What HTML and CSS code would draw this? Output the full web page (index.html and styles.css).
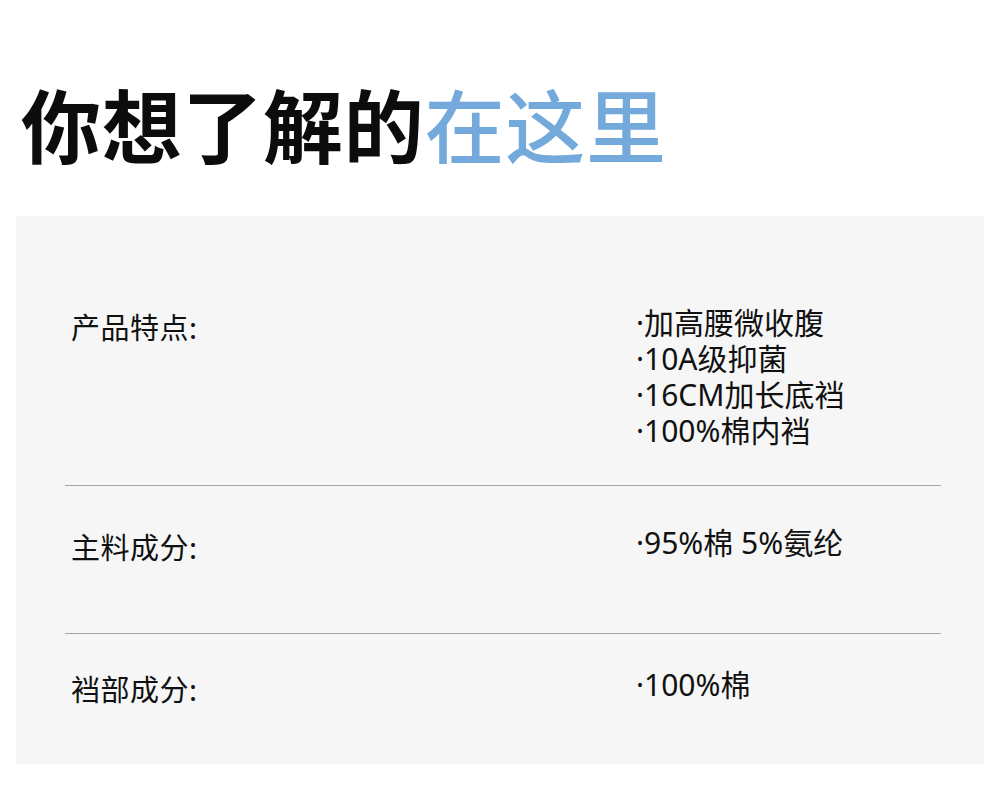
FILE: index.html
```html
<!DOCTYPE html>
<html lang="zh-CN">
<head>
<meta charset="utf-8">
<title>你想了解的在这里</title>
<link rel="stylesheet" href="styles.css">
</head>
<body>
<header class="hero">
  <h1 class="hero-title"><span class="hero-dark">你想了解的</span><span class="hero-blue">在这里</span></h1>
</header>
<section class="spec-panel">
  <div class="spec-row spec-row--first">
    <div class="spec-label">产品特点:</div>
    <ul class="spec-values">
      <li>·加高腰微收腹</li>
      <li>·10A级抑菌</li>
      <li>·16CM加长底裆</li>
      <li>·100%棉内裆</li>
    </ul>
  </div>
  <div class="spec-row spec-row--second">
    <div class="spec-label">主料成分:</div>
    <ul class="spec-values">
      <li>·95%棉 5%氨纶</li>
    </ul>
  </div>
  <div class="spec-row spec-row--last">
    <div class="spec-label">裆部成分:</div>
    <ul class="spec-values">
      <li>·100%棉</li>
    </ul>
  </div>
</section>
</body>
</html>
```
FILE: styles.css
```css
html, body {
  margin: 0;
  padding: 0;
  background: #ffffff;
}

body {
  font-family: "Noto Sans", "Noto Sans CJK SC", sans-serif;
  color: #111111;
}

.hero {
  padding: 74px 0 0 21px;
  height: 138px;
  box-sizing: border-box;
}

.hero-title {
  margin: 0;
  font-family: "Noto Sans CJK SC", sans-serif;
  font-size: 80px;
  line-height: 96px;
  letter-spacing: 0.7px;
  font-weight: 700;
}

.hero-dark {
  color: #0c0c0c;
  font-weight: 700;
}

.hero-blue {
  color: #74a9db;
  font-weight: 500;
}

.spec-panel {
  margin: 78px 16px 0 16px;
  background: #f6f6f6;
  padding: 0 43px 0 49px;
  height: 548px;
  box-sizing: border-box;
}

.spec-row {
  display: grid;
  grid-template-columns: 571px 1fr;
  font-size: 30px;
  line-height: 36px;
}

.spec-row--first {
  padding: 89px 0 36px;
  border-bottom: 1px solid #a2a7a4;
}

.spec-row--second {
  padding: 39px 0 72px;
  border-bottom: 1px solid #a2a7a4;
}

.spec-row--last {
  padding: 33px 0 60px;
}

.spec-label {
  padding: 3px 0 0 6px;
  margin-bottom: -3px;
  font-family: "Noto Sans CJK SC", sans-serif;
  font-size: 29px;
  letter-spacing: 0.5px;
}

.spec-values {
  list-style: none;
  margin: 0;
  padding: 0;
}

.spec-values li {
  margin: 0;
  padding: 0;
}
```
